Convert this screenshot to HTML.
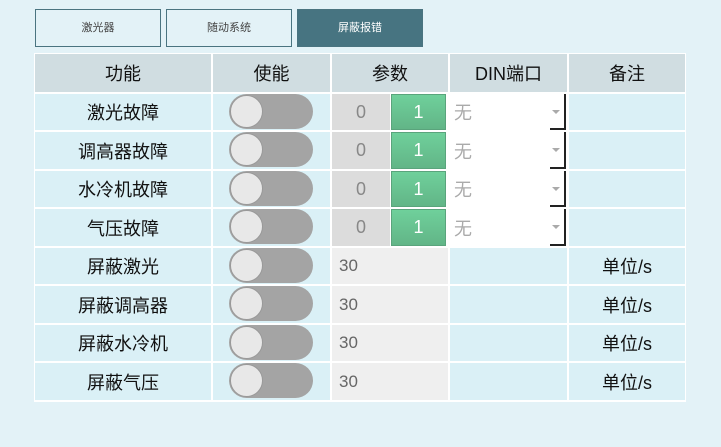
<!DOCTYPE html>
<html><head><meta charset="utf-8"><style>
body{margin:0;width:721px;height:447px;background:#e3f2f7;font-family:"Liberation Sans","Noto Sans CJK SC",sans-serif;position:relative;overflow:hidden}
.tab{position:absolute;top:9px;height:36px;width:124px;border:1px solid #4a7480;background:#e3f2f7;font-size:11px;color:#444;text-align:center;line-height:36px}
.c{position:absolute;box-sizing:border-box;display:flex;align-items:center;justify-content:center;font-size:18px;color:#111}
.h{background:#d0dde1}
.r{background:#daf0f6}
.tg{position:absolute;width:84px;height:35px;border-radius:18px;background:#a4a4a4}
.tg::before{content:"";position:absolute;left:1px;top:1px;width:31px;height:31px;border-radius:50%;background:#e8e8e8;border:1px solid #999}
.z{background:#dcdcdc;color:#888}
.g{background:linear-gradient(#6fd09b,#62b587);color:#fff;border:1px solid #5aa47c}
.dd{background:#fff;color:#aaa;justify-content:flex-start;padding-left:4px;border-right:2px solid #222}
.dd::after{content:"";position:absolute;right:4px;top:16px;border:4px solid transparent;border-top:4px solid #aaa}
.dd::before{content:"";position:absolute;right:-2px;bottom:0;width:16px;height:2px;background:#222}
.v{background:#efefef;color:#666;justify-content:flex-start;padding-left:7px;font-size:17px}
</style></head><body>
<div class="tab" style="left:35px">激光器</div>
<div class="tab" style="left:166px">随动系统</div>
<div class="tab" style="left:297px;background:#477481;color:#fff">屏蔽报错</div>
<div style="position:absolute;left:34px;top:53px;width:652px;height:349px;background:#fff"></div>

<div class="c h" style="left:35px;top:54px;width:176px;height:38px">功能</div>
<div class="c h" style="left:213px;top:54px;width:117px;height:38px">使能</div>
<div class="c h" style="left:332px;top:54px;width:116px;height:38px">参数</div>
<div class="c h" style="left:450px;top:54px;width:117px;height:38px">DIN端口</div>
<div class="c h" style="left:569px;top:54px;width:116px;height:38px">备注</div>

<div class="c r" style="left:35px;top:94px;width:176px;height:36px">激光故障</div>
<div class="c r" style="left:213px;top:94px;width:117px;height:36px"></div>
<div class="c z" style="left:332px;top:94px;width:58px;height:36px">0</div>
<div class="c g" style="left:391px;top:94px;width:55px;height:36px">1</div>
<div class="c dd" style="left:450px;top:94px;width:116px;height:36px">无</div>
<div class="c r" style="left:569px;top:94px;width:116px;height:36px"></div>

<div class="c r" style="left:35px;top:132px;width:176px;height:37px">调高器故障</div>
<div class="c r" style="left:213px;top:132px;width:117px;height:37px"></div>
<div class="c z" style="left:332px;top:132px;width:58px;height:37px">0</div>
<div class="c g" style="left:391px;top:132px;width:55px;height:37px">1</div>
<div class="c dd" style="left:450px;top:132px;width:116px;height:37px">无</div>
<div class="c r" style="left:569px;top:132px;width:116px;height:37px"></div>

<div class="c r" style="left:35px;top:171px;width:176px;height:36px">水冷机故障</div>
<div class="c r" style="left:213px;top:171px;width:117px;height:36px"></div>
<div class="c z" style="left:332px;top:171px;width:58px;height:36px">0</div>
<div class="c g" style="left:391px;top:171px;width:55px;height:36px">1</div>
<div class="c dd" style="left:450px;top:171px;width:116px;height:36px">无</div>
<div class="c r" style="left:569px;top:171px;width:116px;height:36px"></div>

<div class="c r" style="left:35px;top:209px;width:176px;height:37px">气压故障</div>
<div class="c r" style="left:213px;top:209px;width:117px;height:37px"></div>
<div class="c z" style="left:332px;top:209px;width:58px;height:37px">0</div>
<div class="c g" style="left:391px;top:209px;width:55px;height:37px">1</div>
<div class="c dd" style="left:450px;top:209px;width:116px;height:37px">无</div>
<div class="c r" style="left:569px;top:209px;width:116px;height:37px"></div>

<div class="c r" style="left:35px;top:248px;width:176px;height:36px">屏蔽激光</div>
<div class="c r" style="left:213px;top:248px;width:117px;height:36px"></div>
<div class="c v" style="left:332px;top:248px;width:116px;height:36px">30</div>
<div class="c r" style="left:450px;top:248px;width:117px;height:36px"></div>
<div class="c r" style="left:569px;top:248px;width:116px;height:36px">单位/s</div>

<div class="c r" style="left:35px;top:286px;width:176px;height:37px">屏蔽调高器</div>
<div class="c r" style="left:213px;top:286px;width:117px;height:37px"></div>
<div class="c v" style="left:332px;top:286px;width:116px;height:37px">30</div>
<div class="c r" style="left:450px;top:286px;width:117px;height:37px"></div>
<div class="c r" style="left:569px;top:286px;width:116px;height:37px">单位/s</div>

<div class="c r" style="left:35px;top:325px;width:176px;height:36px">屏蔽水冷机</div>
<div class="c r" style="left:213px;top:325px;width:117px;height:36px"></div>
<div class="c v" style="left:332px;top:325px;width:116px;height:36px">30</div>
<div class="c r" style="left:450px;top:325px;width:117px;height:36px"></div>
<div class="c r" style="left:569px;top:325px;width:116px;height:36px">单位/s</div>

<div class="c r" style="left:35px;top:363px;width:176px;height:37px">屏蔽气压</div>
<div class="c r" style="left:213px;top:363px;width:117px;height:37px"></div>
<div class="c v" style="left:332px;top:363px;width:116px;height:37px">30</div>
<div class="c r" style="left:450px;top:363px;width:117px;height:37px"></div>
<div class="c r" style="left:569px;top:363px;width:116px;height:37px">单位/s</div>

<div class="tg" style="left:229px;top:94px"></div>
<div class="tg" style="left:229px;top:132px"></div>
<div class="tg" style="left:229px;top:171px"></div>
<div class="tg" style="left:229px;top:209px"></div>
<div class="tg" style="left:229px;top:248px"></div>
<div class="tg" style="left:229px;top:286px"></div>
<div class="tg" style="left:229px;top:325px"></div>
<div class="tg" style="left:229px;top:363px"></div>
</body></html>
